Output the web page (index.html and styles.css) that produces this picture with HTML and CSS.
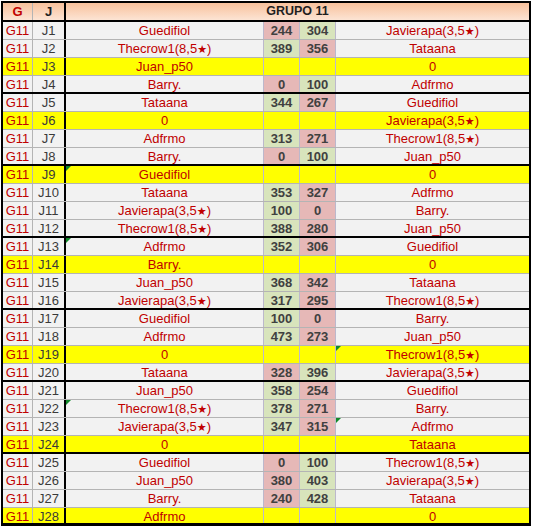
FILE: index.html
```html
<!DOCTYPE html>
<html>
<head>
<meta charset="utf-8">
<link rel="stylesheet" href="styles.css">
</head>
<body>
<div class="sheet">
  <div class="row head">
    <div class="c g hg">G</div>
    <div class="c j hj">J</div>
    <div class="c title">GRUPO 11</div>
  </div>

  <div class="row"><div class="c g">G11</div><div class="c j">J1</div><div class="c n">Guedifiol</div><div class="c s lose">244</div><div class="c s win">304</div><div class="c n2">Javierapa(3,5<span class="st">★</span>)</div></div>
  <div class="row"><div class="c g">G11</div><div class="c j">J2</div><div class="c n">Thecrow1(8,5<span class="st">★</span>)</div><div class="c s win">389</div><div class="c s lose">356</div><div class="c n2">Tataana</div></div>
  <div class="row y"><div class="c g">G11</div><div class="c j">J3</div><div class="c n">Juan_p50</div><div class="c s"></div><div class="c s"></div><div class="c n2">0</div></div>
  <div class="row end"><div class="c g">G11</div><div class="c j">J4</div><div class="c n">Barry.</div><div class="c s lose">0</div><div class="c s win">100</div><div class="c n2">Adfrmo</div></div>

  <div class="row"><div class="c g">G11</div><div class="c j">J5</div><div class="c n">Tataana</div><div class="c s win">344</div><div class="c s lose">267</div><div class="c n2">Guedifiol</div></div>
  <div class="row y"><div class="c g">G11</div><div class="c j">J6</div><div class="c n">0</div><div class="c s"></div><div class="c s"></div><div class="c n2">Javierapa(3,5<span class="st">★</span>)</div></div>
  <div class="row"><div class="c g">G11</div><div class="c j">J7</div><div class="c n">Adfrmo</div><div class="c s win">313</div><div class="c s lose">271</div><div class="c n2">Thecrow1(8,5<span class="st">★</span>)</div></div>
  <div class="row end"><div class="c g">G11</div><div class="c j">J8</div><div class="c n">Barry.</div><div class="c s lose">0</div><div class="c s win">100</div><div class="c n2">Juan_p50</div></div>

  <div class="row y"><div class="c g">G11</div><div class="c j">J9</div><div class="c n mark">Guedifiol</div><div class="c s"></div><div class="c s"></div><div class="c n2">0</div></div>
  <div class="row"><div class="c g">G11</div><div class="c j">J10</div><div class="c n">Tataana</div><div class="c s win">353</div><div class="c s lose">327</div><div class="c n2">Adfrmo</div></div>
  <div class="row"><div class="c g">G11</div><div class="c j">J11</div><div class="c n">Javierapa(3,5<span class="st">★</span>)</div><div class="c s win">100</div><div class="c s lose">0</div><div class="c n2">Barry.</div></div>
  <div class="row end"><div class="c g">G11</div><div class="c j">J12</div><div class="c n">Thecrow1(8,5<span class="st">★</span>)</div><div class="c s win">388</div><div class="c s lose">280</div><div class="c n2">Juan_p50</div></div>

  <div class="row"><div class="c g">G11</div><div class="c j">J13</div><div class="c n mark">Adfrmo</div><div class="c s win">352</div><div class="c s lose">306</div><div class="c n2">Guedifiol</div></div>
  <div class="row y"><div class="c g">G11</div><div class="c j">J14</div><div class="c n">Barry.</div><div class="c s"></div><div class="c s"></div><div class="c n2">0</div></div>
  <div class="row"><div class="c g">G11</div><div class="c j">J15</div><div class="c n">Juan_p50</div><div class="c s win">368</div><div class="c s lose">342</div><div class="c n2">Tataana</div></div>
  <div class="row end"><div class="c g">G11</div><div class="c j">J16</div><div class="c n">Javierapa(3,5<span class="st">★</span>)</div><div class="c s win">317</div><div class="c s lose">295</div><div class="c n2">Thecrow1(8,5<span class="st">★</span>)</div></div>

  <div class="row"><div class="c g">G11</div><div class="c j">J17</div><div class="c n">Guedifiol</div><div class="c s win">100</div><div class="c s lose">0</div><div class="c n2">Barry.</div></div>
  <div class="row"><div class="c g">G11</div><div class="c j">J18</div><div class="c n">Adfrmo</div><div class="c s win">473</div><div class="c s lose">273</div><div class="c n2">Juan_p50</div></div>
  <div class="row y"><div class="c g">G11</div><div class="c j">J19</div><div class="c n">0</div><div class="c s"></div><div class="c s"></div><div class="c n2 mark">Thecrow1(8,5<span class="st">★</span>)</div></div>
  <div class="row end"><div class="c g">G11</div><div class="c j">J20</div><div class="c n">Tataana</div><div class="c s lose">328</div><div class="c s win">396</div><div class="c n2">Javierapa(3,5<span class="st">★</span>)</div></div>

  <div class="row"><div class="c g">G11</div><div class="c j">J21</div><div class="c n">Juan_p50</div><div class="c s win">358</div><div class="c s lose">254</div><div class="c n2">Guedifiol</div></div>
  <div class="row"><div class="c g">G11</div><div class="c j">J22</div><div class="c n mark">Thecrow1(8,5<span class="st">★</span>)</div><div class="c s win">378</div><div class="c s lose">271</div><div class="c n2">Barry.</div></div>
  <div class="row"><div class="c g">G11</div><div class="c j">J23</div><div class="c n">Javierapa(3,5<span class="st">★</span>)</div><div class="c s win">347</div><div class="c s lose">315</div><div class="c n2 mark">Adfrmo</div></div>
  <div class="row y end"><div class="c g">G11</div><div class="c j">J24</div><div class="c n">0</div><div class="c s"></div><div class="c s"></div><div class="c n2">Tataana</div></div>

  <div class="row"><div class="c g">G11</div><div class="c j">J25</div><div class="c n">Guedifiol</div><div class="c s lose">0</div><div class="c s win">100</div><div class="c n2">Thecrow1(8,5<span class="st">★</span>)</div></div>
  <div class="row"><div class="c g">G11</div><div class="c j">J26</div><div class="c n">Juan_p50</div><div class="c s lose">380</div><div class="c s win">403</div><div class="c n2">Javierapa(3,5<span class="st">★</span>)</div></div>
  <div class="row"><div class="c g">G11</div><div class="c j">J27</div><div class="c n">Barry.</div><div class="c s lose">240</div><div class="c s win">428</div><div class="c n2">Tataana</div></div>
  <div class="row y last"><div class="c g">G11</div><div class="c j">J28</div><div class="c n">Adfrmo</div><div class="c s"></div><div class="c s"></div><div class="c n2">0</div></div>
</div>
</body>
</html>
```

FILE: styles.css
```css
html, body {
  margin: 0;
  padding: 0;
  background: #ffffff;
}
body {
  padding: 1px 0 0 1px;
  font-family: "Liberation Sans", Arial, sans-serif;
  font-size: 13px;
}
.sheet {
  width: 526px;
  border: 2px solid #000;
  border-bottom: none;
}
.row {
  display: grid;
  grid-template-columns: 30px 33px 198px 36px 36px 193px;
  height: 18px;
  box-sizing: border-box;
  border-bottom: 1px solid #b4b4b4;
  background: #f2f2f2;
}
.row.y {
  background: #ffff00;
}
.row.end {
  border-bottom: 2px solid #000;
}
.row.last {
  border-bottom: 3px solid #000;
}
.c {
  box-sizing: border-box;
  text-align: center;
  line-height: 17px;
  white-space: nowrap;
  overflow: hidden;
  position: relative;
}
.g {
  color: #c00000;
  border-right: 1px solid #b4b4b4;
}
.j {
  color: #3a3a3a;
  border-right: 2px solid #000;
}
.n {
  color: #c00000;
  border-right: 1px solid #bcb8cc;
}
.n2 {
  color: #c00000;
}
.s {
  color: #404040;
  font-weight: bold;
  border-right: 1px solid #bcb8cc;
}
.win {
  background: #d8e4bc;
}
.lose {
  background: #e6b8b7;
}
.st {
  font-family: "DejaVu Sans", sans-serif;
  font-size: 11px;
}
.mark::before {
  content: "";
  position: absolute;
  left: 0;
  top: 0;
  border-top: 5px solid #108a2a;
  border-right: 5px solid transparent;
}
.head {
  height: 19px;
  border-bottom: 2px solid #000;
  background: linear-gradient(#f8c19c, #fce4d4);
}
.head .c {
  font-weight: bold;
  line-height: 17px;
}
.hg {
  color: #c00000;
}
.hj {
  color: #1f1f1f;
}
.title {
  grid-column: 3 / 7;
  color: #1f1f1f;
  font-size: 12.5px;
}
```
